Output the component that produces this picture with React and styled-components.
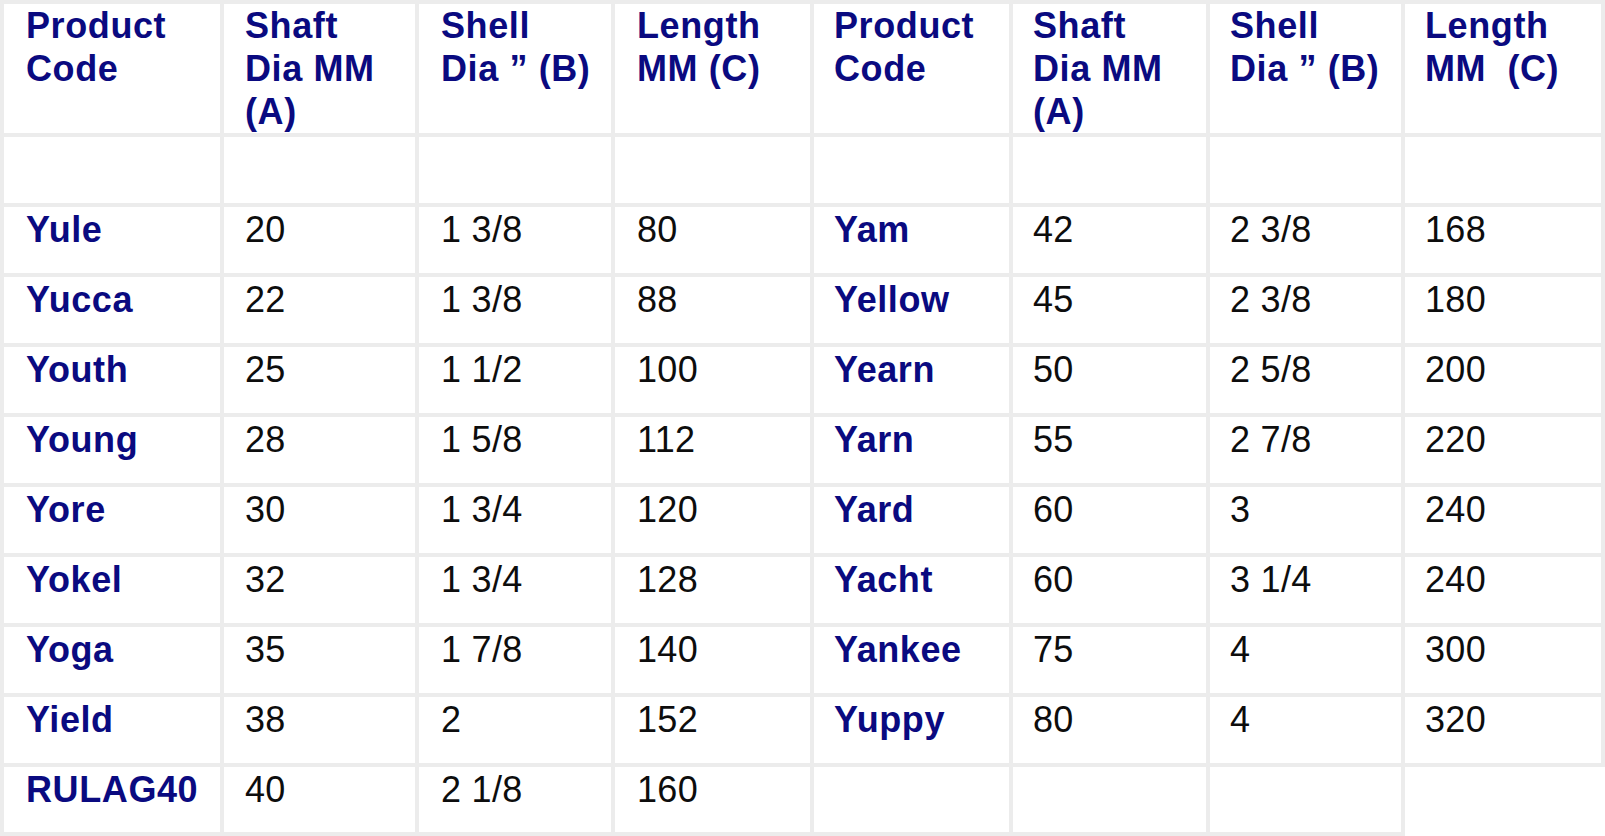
import React from "react";
import styled, { createGlobalStyle } from "styled-components";

const GlobalStyle = createGlobalStyle`
  html, body {
    margin: 0;
    padding: 0;
    background: #ffffff;
  }
  body {
    font-family: "Liberation Sans", Arial, Helvetica, sans-serif;
  }
`;

const Table = styled.div`
  display: grid;
  grid-template-columns: 216px 191px 192px 195px 195px 193px 191px 196px;
  grid-template-rows: 129px repeat(9, 66px) 65px;
  gap: 4px;
  padding: 4px;
  width: 1605px;
  box-sizing: border-box;
  background: #ffffff;
`;

const Cell = styled.div`
  background: #ffffff;
  box-shadow: 0 0 0 4px #ececec;
  padding: ${(p) => (p.$head ? "0" : "1px")} 8px 0 ${(p) => p.$pad || 20}px;
  font-size: 36px;
  line-height: 43px;
  font-weight: ${(p) => (p.$bold ? 700 : 400)};
  color: ${(p) => (p.$bold ? "#0a0a80" : "#0d0d0d")};
  letter-spacing: ${(p) => (p.$bold ? "0.6px" : "0.3px")};
  white-space: pre;
  overflow: hidden;
`;

const headers = [
  "Product\nCode",
  "Shaft\nDia MM\n(A)",
  "Shell\nDia \u201d (B)",
  "Length\nMM (C)",
  "Product\nCode",
  "Shaft\nDia MM\n(A)",
  "Shell\nDia \u201d (B)",
  "Length\nMM  (C)",
];

const left = [
  ["Yule", "20", "1 3/8", "80"],
  ["Yucca", "22", "1 3/8", "88"],
  ["Youth", "25", "1 1/2", "100"],
  ["Young", "28", "1 5/8", "112"],
  ["Yore", "30", "1 3/4", "120"],
  ["Yokel", "32", "1 3/4", "128"],
  ["Yoga", "35", "1 7/8", "140"],
  ["Yield", "38", "2", "152"],
  ["RULAG40", "40", "2 1/8", "160"],
];

const right = [
  ["Yam", "42", "2 3/8", "168"],
  ["Yellow", "45", "2 3/8", "180"],
  ["Yearn", "50", "2 5/8", "200"],
  ["Yarn", "55", "2 7/8", "220"],
  ["Yard", "60", "3", "240"],
  ["Yacht", "60", "3 1/4", "240"],
  ["Yankee", "75", "4", "300"],
  ["Yuppy", "80", "4", "320"],
  ["", "", ""],
];

const pads = [22, 21, 22, 22, 20, 20, 20, 20];

export default function App() {
  const rows = left.map((l, i) => [...l, ...right[i]]);
  return (
    <>
      <GlobalStyle />
      <Table>
        {headers.map((h, i) => (
          <Cell key={"h" + i} $head $bold $pad={pads[i]}>
            {h}
          </Cell>
        ))}
        {headers.map((_, i) => (
          <Cell key={"e" + i} $pad={pads[i]} />
        ))}
        {rows.map((r, ri) =>
          r.map((v, ci) => (
            <Cell key={ri + "-" + ci} $bold={ci % 4 === 0} $pad={pads[ci]}>
              {v}
            </Cell>
          ))
        )}
      </Table>
    </>
  );
}
